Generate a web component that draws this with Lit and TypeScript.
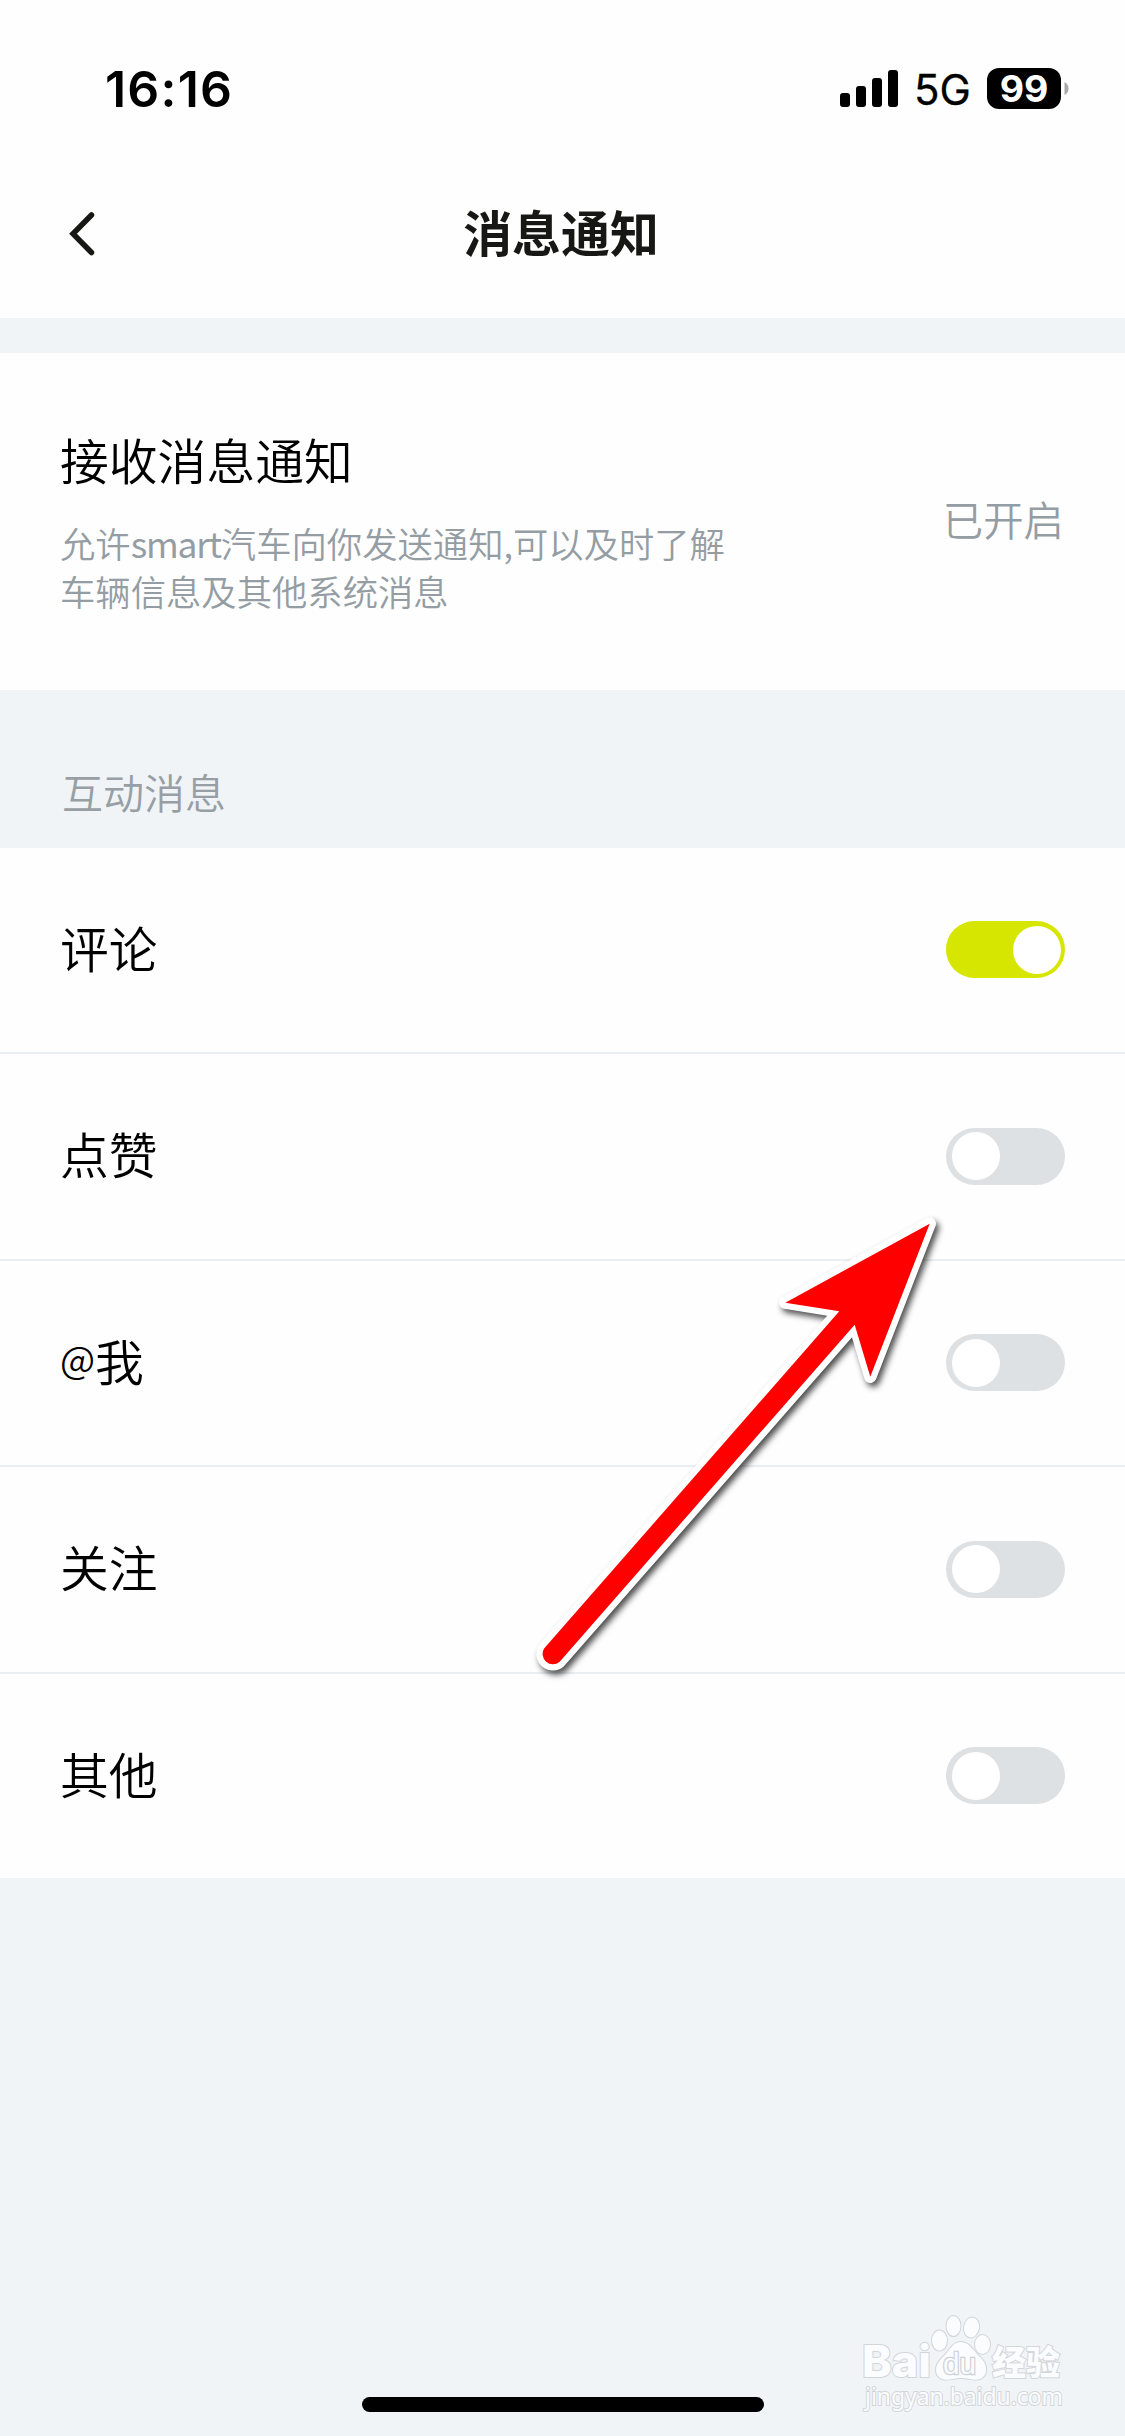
import { LitElement, html, css } from "lit";
import { customElement, property } from "lit/decorators.js";
import { classMap } from "lit/directives/class-map.js";

@customElement("toggle-switch")
class ToggleSwitch extends LitElement {
  @property({ type: Boolean }) on = false;

  static styles = css`
    :host {
      display: block;
    }
    .track {
      display: flex;
      align-items: center;
      box-sizing: border-box;
      width: 119px;
      height: 57px;
      padding: 0 4.5px 0 6px;
      border-radius: 29px;
      background: #dde1e4;
    }
    .on {
      justify-content: flex-end;
      background: #d7e600;
    }
    .knob {
      width: 48px;
      height: 48px;
      border-radius: 50%;
      background: #fff;
    }
  `;

  render() {
    return html`<div class=${classMap({ track: true, on: this.on })} role="switch" aria-checked=${this.on}>
      <div class="knob"></div>
    </div>`;
  }
}

@customElement("status-bar")
class StatusBar extends LitElement {
  static styles = css`
    :host {
      display: flex;
      justify-content: space-between;
      align-items: center;
      box-sizing: border-box;
      height: 150px;
      padding: 27px 56px 0 105px;
      font-family: Inter, "Liberation Sans", sans-serif;
      color: #000;
    }
    .time {
      font-size: 50px;
      font-weight: 600;
      line-height: 60px;
      letter-spacing: 1.2px;
    }
    .right {
      display: flex;
      align-items: center;
    }
    .signal {
      display: block;
      width: 58px;
      height: 37px;
    }
    .net {
      margin-left: 16px;
      width: 73px;
      font-size: 42px;
      line-height: 50px;
      margin-top: 3px;
      -webkit-text-stroke: 0.3px #000;
    }
    .battery {
      width: 74px;
      height: 41px;
      border-radius: 12px;
      background: #000;
      color: #fff;
      font-size: 37.5px;
      font-weight: 700;
      line-height: 41px;
      text-align: center;
    }
    .cap {
      display: block;
      width: 5px;
      height: 13px;
      margin-left: 3px;
    }
  `;

  render() {
    return html`
      <div class="time">16:16</div>
      <div class="right">
        <svg class="signal" viewBox="0 0 58 37">
          <rect x="0" y="23" width="10" height="14" rx="3" />
          <rect x="16" y="16" width="10" height="21" rx="3" />
          <rect x="32" y="8" width="10" height="29" rx="3" />
          <rect x="48" y="0" width="10" height="37" rx="3" />
        </svg>
        <div class="net">5G</div>
        <div class="battery">99</div>
        <svg class="cap" viewBox="0 0 5 13"><path d="M0.5 0Q4.5 2 4.5 6.500T0.500 13Z" fill="#aaa" /></svg>
      </div>
    `;
  }
}

@customElement("app-root")
class AppRoot extends LitElement {
  private rows = [
    { label: "评论", on: true },
    { label: "点赞", on: false },
    { prefix: "@", label: "我", on: false },
    { label: "关注", on: false },
    { label: "其他", on: false },
  ];

  static styles = css`
    :host {
      display: block;
      position: relative;
      width: 1125px;
      height: 2436px;
      overflow: hidden;
      background: #f0f4f7;
      font-family: "Noto Sans CJK SC", sans-serif;
    }
    .page {
      display: flex;
      flex-direction: column;
      height: 2436px;
    }
    .top {
      height: 318px;
      background: #fefefe;
    }
    .nav {
      display: grid;
      grid-template-columns: 120px 1fr 123px;
      align-items: center;
      height: 168px;
    }
    .back {
      display: block;
      width: 28px;
      height: 48px;
      margin-left: 67px;
    }
    .title {
      margin: 0;
      padding-bottom: 6px;
      font-size: 48.900px;
      font-weight: 700;
      line-height: 72px;
      text-align: center;
      color: #171815;
    }
    .permission {
      display: flex;
      justify-content: space-between;
      align-items: center;
      box-sizing: border-box;
      height: 337px;
      margin-top: 35px;
      padding: 0 61px 5px 60px;
      background: #fefefe;
    }
    .name {
      font-size: 48.800px;
      font-weight: 350;
      line-height: 72px;
      color: #000;
    }
    .desc {
      margin-top: 24px;
      font-size: 35.350px;
      font-weight: 350;
      line-height: 48px;
      color: #949da3;
      white-space: nowrap;
    }
    .brand {
      font-weight: 400;
      letter-spacing: -1.2px;
    }
    .state {
      font-size: 40.400px;
      font-weight: 350;
      line-height: 60px;
      color: #949da3;
    }
    .group {
      box-sizing: border-box;
      height: 157.600px;
      padding: 71px 0 0 62px;
      font-size: 41px;
      font-weight: 350;
      line-height: 60px;
      color: #979fa4;
    }
    .row {
      display: flex;
      justify-content: space-between;
      align-items: center;
      box-sizing: border-box;
      height: 206.500px;
      padding: 0 60px;
      border-bottom: 2px solid #e9eef2;
      background: #fefefe;
    }
    .row .name {
      height: 72px;
      padding-bottom: 6px;
    }
    .row:last-child {
      height: 204px;
      border-bottom: none;
    }
    .at {
      font-size: 37.500px;
      line-height: 1;
      vertical-align: 7px;
    }
    .bottom {
      flex: 1;
      display: flex;
      justify-content: center;
      align-items: flex-end;
      padding-bottom: 24px;
    }
    .home {
      width: 402px;
      height: 15px;
      border-radius: 8px;
      background: #000;
    }
    .arrow {
      position: absolute;
      left: 520px;
      top: 1200px;
      width: 440px;
      height: 500px;
      filter: drop-shadow(3px 4px 3px rgba(0, 0, 0, 0.7));
    }
    .watermark {
      position: absolute;
      left: 840px;
      top: 2290px;
      width: 260px;
      height: 146px;
    }
    .mark {
      fill: #fafcfe;
      stroke: #d3d6d9;
      stroke-width: 2px;
      paint-order: stroke;
    }
    .latin {
      font: 800 44px Inter, sans-serif;
    }
    .du {
      font: 400 29px "Liberation Sans", sans-serif;
      stroke-width: 2.500px;
      stroke: #cfd2d5;
    }
    .cjk {
      font: 900 34px "Noto Sans CJK SC", sans-serif;
    }
    .site {
      font: 400 23px "Noto Sans", sans-serif;
    }
  `;

  render() {
    return html`
      <div class="page">
        <div class="top">
          <status-bar></status-bar>
          <div class="nav">
            <svg class="back" viewBox="0 0 28 48" fill="none" stroke="#171815" stroke-width="5.500" stroke-linecap="round">
              <path d="M24.500 5L6 23.800L24.500 42.500" />
            </svg>
            <h1 class="title">消息通知</h1>
          </div>
        </div>
        <div class="permission">
          <div>
            <div class="name">接收消息通知</div>
            <div class="desc">允许<span class="brand">smart</span>汽车向你发送通知,可以及时了解<br />车辆信息及其他系统消息</div>
          </div>
          <div class="state">已开启</div>
        </div>
        <div class="group">互动消息</div>
        <div>
          ${this.rows.map(
            (r) => html`<div class="row">
              <div class="name">${r.prefix ? html`<span class="at">${r.prefix}</span>` : ""}${r.label}</div>
              <toggle-switch .on=${r.on}></toggle-switch>
            </div>`
          )}
        </div>
        <div class="bottom"><div class="home"></div></div>
      </div>

      <svg class="arrow" viewBox="520 1200 440 500">
        <path
          d="M929.700 1223.700L785.300 1302.700L839.300 1311.300L544.300 1648.300A10.300 10.300 0 0 0 559.700 1661.700L854.700 1324.700L870.300 1376.700Z"
          fill="#f00"
          stroke="#fff"
          stroke-width="12.500"
          stroke-linejoin="round"
          paint-order="stroke"
        />
      </svg>

      <svg class="watermark" viewBox="0 0 260 146">
        <text class="mark latin" x="22" y="87" textLength="69" lengthAdjust="spacingAndGlyphs">Bai</text>
        <g class="mark">
          <ellipse cx="99.500" cy="50.500" rx="7.500" ry="10" />
          <ellipse cx="113.500" cy="36" rx="7" ry="10" />
          <ellipse cx="131.500" cy="37.500" rx="7.500" ry="10" transform="rotate(10 131.500 37.500)" />
          <ellipse cx="142.500" cy="54.500" rx="7.500" ry="9.500" />
          <path d="M120.500 52C112 52 110 61 102 68C94 75 94 86 102 89C108 91 114 88 121 88C128 88 134 91 140 89C148 86 148 75 141 68C133 61 130 52 120.500 52Z" />
        </g>
        <text class="mark du" x="103" y="84" textLength="33" lengthAdjust="spacingAndGlyphs">du</text>
        <text class="mark cjk" x="152" y="84.500" textLength="68" lengthAdjust="spacingAndGlyphs">经验</text>
        <text class="mark site" x="25" y="115" textLength="198" lengthAdjust="spacingAndGlyphs">jingyan.baidu.com</text>
      </svg>
    `;
  }
}
